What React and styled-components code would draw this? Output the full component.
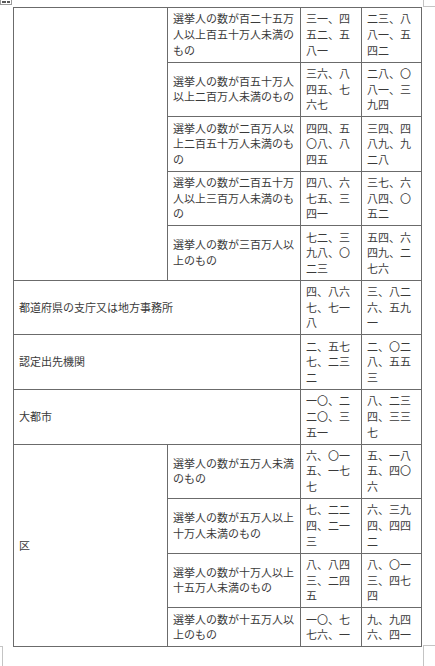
import React from "react";
import styled, { createGlobalStyle } from "styled-components";

const GlobalStyle = createGlobalStyle`
  html, body { margin: 0; padding: 0; background: #ffffff; }
  body { font-family: "Noto Sans CJK JP", "Noto Sans", sans-serif; }
`;

const Page = styled.div`
  position: relative;
  width: 435px;
  height: 666px;
  box-sizing: border-box;
  padding: 7px 0 0 13px;
  overflow: hidden;
  background: #fff;
`;

const Handle = styled.div`
  position: absolute;
  left: 0;
  top: -1px;
  width: 12px;
  height: 6px;
  border: 1px solid #9a9a9a;
  box-sizing: border-box;
  display: flex;
  gap: 1px;
  padding: 1px;
  background: #fff;
  & > span {
    flex: 1;
    background: #595959;
  }
`;

const CropMark = styled.div`
  position: absolute;
  width: ${(p) => p.$w}px;
  height: ${(p) => p.$h}px;
  border-color: #c4c4c4;
  border-style: solid;
  border-width: 0;
  box-sizing: border-box;
`;

const Table = styled.table`
  border-collapse: collapse;
  table-layout: fixed;
  width: 409px;
  font-family: "Noto Sans CJK JP", "Noto Sans", sans-serif;
  font-size: 11px;
  color: #3a3a3a;
`;

const Col = styled.col`
  width: ${(p) => p.$w}px;
`;

const Cell = styled.td`
  border: 1px solid #6b6b6b;
  padding: 3.4px 5px;
  line-height: 15.6px;
  vertical-align: middle;
  text-align: left;
  word-break: break-all;
`;

const upper = [
  ["選挙人の数が百二十五万人以上百五十万人未満のもの", "三一、四五二、五八一", "二三、八八一、五四二"],
  ["選挙人の数が百五十万人以上二百万人未満のもの", "三六、八四五、七六七", "二八、〇八一、三九四"],
  ["選挙人の数が二百万人以上二百五十万人未満のもの", "四四、五〇八、八四五", "三四、四八九、九二八"],
  ["選挙人の数が二百五十万人以上三百万人未満のもの", "四八、六七五、三四一", "三七、六八四、〇五二"],
  ["選挙人の数が三百万人以上のもの", "七二、三九八、〇二三", "五四、六四九、二七六"],
];

const middle = [
  ["都道府県の支庁又は地方事務所", "四、八六七、七一八", "三、八二六、五九一"],
  ["認定出先機関", "二、五七七、二三二", "二、〇二八、五五三"],
  ["大都市", "一〇、二二〇、三五一", "八、二三四、三三七"],
];

const wards = [
  ["選挙人の数が五万人未満のもの", "六、〇一五、一七七", "五、一八五、四〇六"],
  ["選挙人の数が五万人以上十万人未満のもの", "七、二二四、二一三", "六、三九四、四四二"],
  ["選挙人の数が十万人以上十五万人未満のもの", "八、八四三、二四五", "八、〇一三、四七四"],
  ["選挙人の数が十五万人以上のもの", "一〇、七七六、一", "九、九四六、四一"],
];

export default function App() {
  return (
    <>
      <GlobalStyle />
      <Page>
        <Handle>
          <span />
          <span />
        </Handle>
        <CropMark $w={12} $h={7} style={{ left: 423, top: 0, borderLeftWidth: 1, borderBottomWidth: 1 }} />
        <CropMark $w={3} $h={21} style={{ left: 0, top: 646, borderRightWidth: 1, borderTopWidth: 1 }} />
        <CropMark $w={12} $h={21} style={{ left: 423, top: 645, borderLeftWidth: 1, borderTopWidth: 1 }} />
        <Table>
          <colgroup>
            <Col $w={154} />
            <Col $w={133} />
            <Col $w={61} />
            <Col $w={60} />
          </colgroup>
          <tbody>
            {upper.map((r, i) => (
              <tr key={"u" + i}>
                {i === 0 && <Cell rowSpan={upper.length} />}
                <Cell>{r[0]}</Cell>
                <Cell>{r[1]}</Cell>
                <Cell>{r[2]}</Cell>
              </tr>
            ))}
            {middle.map((r, i) => (
              <tr key={"m" + i}>
                <Cell colSpan={2}>{r[0]}</Cell>
                <Cell>{r[1]}</Cell>
                <Cell>{r[2]}</Cell>
              </tr>
            ))}
            {wards.map((r, i) => (
              <tr key={"w" + i}>
                {i === 0 && <Cell rowSpan={wards.length}>区</Cell>}
                <Cell>{r[0]}</Cell>
                <Cell>{r[1]}</Cell>
                <Cell>{r[2]}</Cell>
              </tr>
            ))}
          </tbody>
        </Table>
      </Page>
    </>
  );
}
